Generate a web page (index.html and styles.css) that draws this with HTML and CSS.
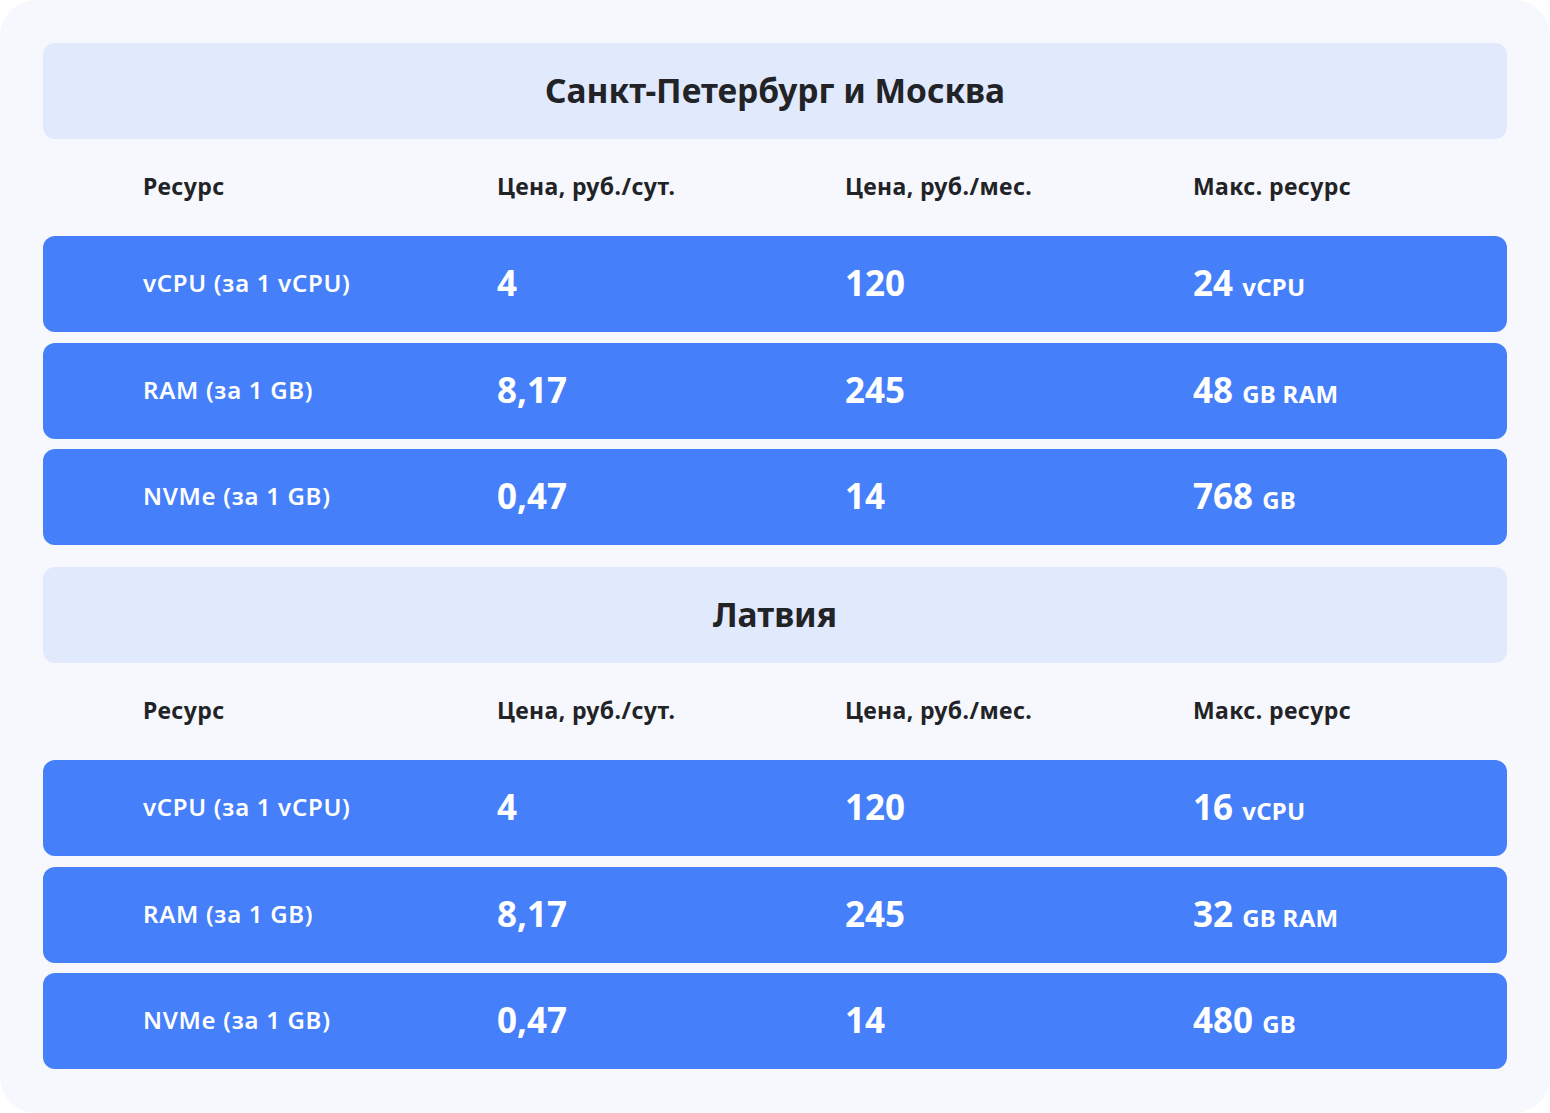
FILE: index.html
```html
<!DOCTYPE html>
<html lang="ru">
<head>
<meta charset="utf-8">
<link rel="stylesheet" href="styles.css">
</head>
<body>
<div class="card">
  <section class="block">
    <div class="title">Санкт-Петербург и Москва</div>
    <div class="grid head"><span>Ресурс</span><span>Цена, руб./сут.</span><span>Цена, руб./мес.</span><span>Макс. ресурс</span></div>
    <div class="grid row"><span class="lbl">vCPU (за 1 vCPU)</span><span class="num">4</span><span class="num">120</span><span class="num">24 <small>vCPU</small></span></div>
    <div class="grid row"><span class="lbl">RAM (за 1 GB)</span><span class="num">8,17</span><span class="num">245</span><span class="num">48 <small>GB RAM</small></span></div>
    <div class="grid row"><span class="lbl">NVMe (за 1 GB)</span><span class="num">0,47</span><span class="num">14</span><span class="num">768 <small>GB</small></span></div>
  </section>
  <section class="block">
    <div class="title">Латвия</div>
    <div class="grid head"><span>Ресурс</span><span>Цена, руб./сут.</span><span>Цена, руб./мес.</span><span>Макс. ресурс</span></div>
    <div class="grid row"><span class="lbl">vCPU (за 1 vCPU)</span><span class="num">4</span><span class="num">120</span><span class="num">16 <small>vCPU</small></span></div>
    <div class="grid row"><span class="lbl">RAM (за 1 GB)</span><span class="num">8,17</span><span class="num">245</span><span class="num">32 <small>GB RAM</small></span></div>
    <div class="grid row"><span class="lbl">NVMe (за 1 GB)</span><span class="num">0,47</span><span class="num">14</span><span class="num">480 <small>GB</small></span></div>
  </section>
</div>
</body>
</html>
```
FILE: styles.css
```css
html, body { margin: 0; padding: 0; background: #ffffff; }
body { font-family: "Noto Sans", "Open Sans", sans-serif; }
.card {
  width: 1550px; height: 1113px; box-sizing: border-box;
  background: #f6f8fd; border-radius: 36px;
  padding: 43px 43px 44px 43px;
  display: flex; flex-direction: column; gap: 22px;
}
.block { display: flex; flex-direction: column; }
.title {
  height: 96px; box-sizing: border-box; padding-bottom: 3px;
  background: #e1e9fc; border-radius: 12px;
  display: flex; align-items: center; justify-content: center;
  font-size: 33.5px; font-weight: 700; color: #222326;
}
.grid {
  display: grid; grid-template-columns: 354px 348px 348px 1fr;
  padding-left: 100px; align-items: center; box-sizing: border-box;
}
.head {
  height: 97px; padding-bottom: 3px;
  font-size: 23px; font-weight: 700; color: #222326; letter-spacing: 0.4px;
}
.row {
  height: 96px; padding-bottom: 3px;
  background: #457ffa; border-radius: 12px; color: #ffffff;
}
.row + .row { margin-top: 10.5px; }
.lbl { font-size: 24px; font-weight: 600; letter-spacing: 0.7px; }
.num { font-size: 35px; font-weight: 700; }
.num small { font-size: 24px; font-weight: 700; letter-spacing: 0.3px; }
```
